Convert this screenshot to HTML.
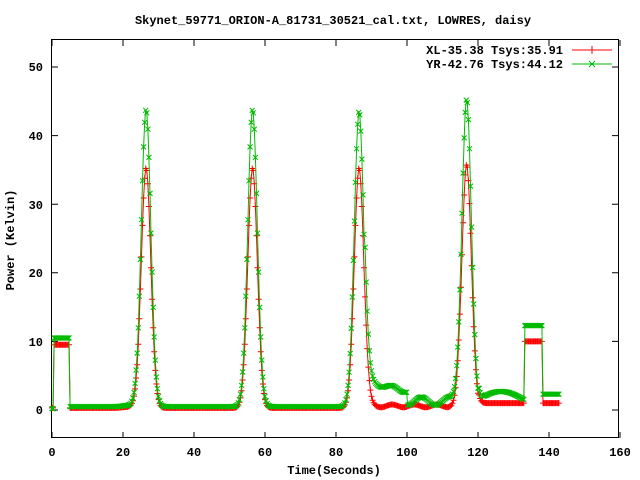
<!DOCTYPE html>
<html><head><meta charset="utf-8"><style>
html,body{margin:0;padding:0;background:#fff;}
svg{display:block;font-family:"Liberation Mono",monospace;font-weight:bold;font-size:12px;}
</style></head><body>
<svg id="s" width="640" height="480" xmlns="http://www.w3.org/2000/svg">
<text x="333" y="24" text-anchor="middle">Skynet_59771_ORION-A_81731_30521_cal.txt, LOWRES, daisy</text>
<g text-anchor="end">
<text x="43" y="414">0</text><text x="43" y="346">10</text><text x="43" y="277">20</text>
<text x="43" y="209">30</text><text x="43" y="140">40</text><text x="43" y="71">50</text>
</g>
<g text-anchor="middle">
<text x="52" y="456">0</text><text x="123" y="456">20</text><text x="194" y="456">40</text>
<text x="265" y="456">60</text><text x="336" y="456">80</text><text x="407" y="456">100</text>
<text x="478" y="456">120</text><text x="549" y="456">140</text><text x="620" y="456">160</text>
<text x="334" y="474">Time(Seconds)</text>
</g>
<text transform="translate(14,240) rotate(-90)" text-anchor="middle">Power (Kelvin)</text>
<text x="563" y="54" text-anchor="end">XL-35.38 Tsys:35.91</text>
<text x="563" y="68" text-anchor="end">YR-42.76 Tsys:44.12</text>
<g stroke="#000" fill="none" stroke-width="1">
<rect x="51.5" y="39.5" width="567" height="398"/>
<path id="ticks" d=""/>
</g>
<g stroke="#f00" fill="none"><path d="M572 50H612M592 46V54"/><path id="r" d=""/></g>
<g stroke="#0b0" fill="none"><path d="M572 64H612M589 61L595 67M589 67L595 61"/><path id="g" d=""/></g>
</svg>
<script>
function X(t){return 52+3.55*t}function Y(v){return 410-6.86*v}
var tk="";
for(var v=0;v<=50;v+=10){var y=Y(v).toFixed(1);tk+="M52 "+y+"h6M618 "+y+"h-6";}
for(var t=0;t<=160;t+=20){var x=X(t).toFixed(1);tk+="M"+x+" 438v-6M"+x+" 40v6";}
document.getElementById("ticks").setAttribute("d",tk);
var peaks=[[26.5,35,43.3],[56.5,35,43.3],[86.5,35,43],[116.8,35.5,44.8]];
function val(t,c){
 var v=c?0.5:0.3;
 if(t<0.5) v=c?0.2:0.3; else if(t<5) v=c?10.5:9.5;
 else if(t>=133&&t<138) v=c?12.3:10;
 else if(t>=138) v=c?2.3:1;
 else{
  if(c){ if(t>88&&t<100) v=4.2-0.12*(t-88)+0.3*Math.sin(t); else if(t>=100&&t<115) v=1.3+0.6*Math.sin(t*0.8); else if(t>120&&t<133) v=1.5+1.2*Math.sin((t-120)/13*Math.PI);}
  else { if(t>88&&t<115) v=0.6+0.2*Math.sin(t); else if(t>120&&t<133) v=1.0;}
  if(t>18&&t<24) v+=0.3*(t-18)/6;
 }
 for(var i=0;i<4;i++){var p=peaks[i];var d=t-p[0];v+=(c?p[2]:p[1])*Math.exp(-d*d/(2*1.35*1.35));}
 return v;
}
function build(c){
 var line="",mk="";
 for(var t=0;t<=143;t+=0.3){
  var x=X(t),y=Y(val(t,c));
  line+=(t===0?"M":"L")+x.toFixed(1)+" "+y.toFixed(1);
  if(c) mk+="M"+(x-2.5).toFixed(1)+" "+(y-2.5).toFixed(1)+"l5 5m0 -5l-5 5";
  else mk+="M"+(x-3).toFixed(1)+" "+y.toFixed(1)+"h6m-3 -3v6";
 }
 return line+mk;
}
document.getElementById("r").setAttribute("d",build(0));
document.getElementById("g").setAttribute("d",build(1));
</script>
</body></html>
